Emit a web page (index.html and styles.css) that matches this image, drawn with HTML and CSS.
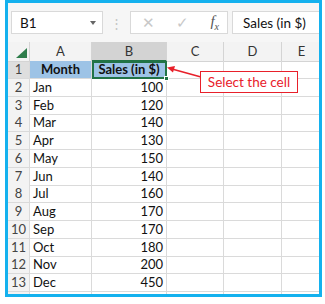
FILE: index.html
```html
<!DOCTYPE html>
<html lang="en">
<head>
    <meta charset="UTF-8">
    <title>Select the cell</title>
    <link rel="stylesheet" href="styles.css">
</head>
<body>
    <div class="frame">
        <!-- Barra de fórmulas -->
        <div class="toolbar">
            <div class="namebox">
                <span>B1</span>
                <span class="caret"></span>
            </div>
            <div class="dots">⋮</div>
            <div class="funcbox">
                <span class="fn-btn">✕</span>
                <span class="fn-btn">✓</span>
                <span class="fx"><i>f</i><sub>x</sub></span>
            </div>
            <div class="formula">Sales (in $)</div>
        </div>

        <!-- Hoja -->
        <div class="sheet">
            <div class="row head">
                <div class="corner"><span class="tri"></span></div>
                <div>A</div>
                <div class="sel-col">B</div>
                <div>C</div>
                <div>D</div>
                <div>E</div>
            </div>
            <div class="row">
                <div class="num sel-row">1</div>
                <div class="title">Month</div>
                <div class="title active">Sales (in $)<span class="handle"></span></div>
                <div></div><div></div><div></div>
            </div>
            <div class="row"><div class="num">2</div><div>Jan</div><div class="val">100</div><div></div><div></div><div></div></div>
            <div class="row"><div class="num">3</div><div>Feb</div><div class="val">120</div><div></div><div></div><div></div></div>
            <div class="row"><div class="num">4</div><div>Mar</div><div class="val">140</div><div></div><div></div><div></div></div>
            <div class="row"><div class="num">5</div><div>Apr</div><div class="val">130</div><div></div><div></div><div></div></div>
            <div class="row"><div class="num">6</div><div>May</div><div class="val">150</div><div></div><div></div><div></div></div>
            <div class="row"><div class="num">7</div><div>Jun</div><div class="val">140</div><div></div><div></div><div></div></div>
            <div class="row"><div class="num">8</div><div>Jul</div><div class="val">160</div><div></div><div></div><div></div></div>
            <div class="row"><div class="num">9</div><div>Aug</div><div class="val">170</div><div></div><div></div><div></div></div>
            <div class="row"><div class="num">10</div><div>Sep</div><div class="val">170</div><div></div><div></div><div></div></div>
            <div class="row"><div class="num">11</div><div>Oct</div><div class="val">180</div><div></div><div></div><div></div></div>
            <div class="row"><div class="num">12</div><div>Nov</div><div class="val">200</div><div></div><div></div><div></div></div>
            <div class="row"><div class="num">13</div><div>Dec</div><div class="val">450</div><div></div><div></div><div></div></div>
            <div class="row"><div class="num"></div><div></div><div></div><div></div><div></div><div></div></div>
        </div>

        <!-- Nota -->
        <svg class="arrow" width="36" height="16" viewBox="0 0 36 16">
            <line x1="35" y1="12" x2="6" y2="4" stroke="#e8202a" stroke-width="1.5"/>
            <polygon points="1,2.5 9,1 7,7.5" fill="#e8202a"/>
        </svg>
        <div class="callout">Select the cell</div>
    </div>
</body>
</html>
```

FILE: styles.css
```css
/* Estilos generales */
* {
    margin: 0;
    padding: 0;
    box-sizing: border-box;
}

body {
    font-family: Lato, "Liberation Sans", Arial, sans-serif;
    background-color: #fff;
    color: #111;
}

/* Marco azul */
.frame {
    position: relative;
    margin-left: 5px;
    width: 317px;
    height: 297px;
    border: 3px solid #14b1ee;
    overflow: hidden;
}

/* Barra de fórmulas */
.toolbar {
    height: 39px;
    background-color: #f6f6f6;
    display: flex;
    align-items: center;
    padding-left: 3px;
}

.namebox,
.funcbox,
.formula {
    height: 23px;
    background-color: #fff;
    border: 1px solid #d9d9d9;
    display: flex;
    align-items: center;
    font-size: 13.5px;
}

.namebox {
    width: 92px;
    padding: 0 6px 0 8px;
    justify-content: space-between;
}

.caret {
    width: 0;
    height: 0;
    border-left: 3.5px solid transparent;
    border-right: 3.5px solid transparent;
    border-top: 4px solid #666;
}

.dots {
    width: 27px;
    text-align: center;
    color: #c4c4c4;
    font-size: 13px;
}

.funcbox {
    width: 98px;
    padding: 0 8px 0 0;
}

.fn-btn {
    color: #c8c8c8;
    font-size: 15px;
    width: 34px;
    text-align: center;
}

.fx {
    margin-left: auto;
    font-family: "Liberation Serif", serif;
    color: #555;
    font-size: 15px;
    line-height: 1;
}

.fx sub {
    font-size: 10px;
    font-style: italic;
}

.formula {
    flex: 1;
    margin-left: 4px;
    padding-left: 10px;
    border-right: none;
}

/* Hoja */
.row {
    display: grid;
    grid-template-columns: 22px 62px 75px 57px 58px 40px;
    height: 17.75px;
    font-size: 13px;
}

.row > div {
    border-right: 1px solid #dadada;
    border-bottom: 1px solid #dadada;
    padding: 0 3px;
    line-height: 17px;
    white-space: nowrap;
}

.row.head {
    height: 19px;
    background-color: #f3f3f3;
}

.row.head > div {
    text-align: center;
    line-height: 18px;
    color: #333;
    border-color: #d4d4d4;
}

.row.head .sel-col {
    background-color: #d3d3d3;
    border-bottom: 2px solid #217346;
}

.corner {
    position: relative;
}

.tri {
    position: absolute;
    right: 2px;
    bottom: 3px;
    width: 0;
    height: 0;
    border-left: 11px solid transparent;
    border-bottom: 10px solid #2e7d4b;
}

.num {
    background-color: #f3f3f3;
    text-align: center;
    color: #444;
    padding: 0 !important;
}

.num.sel-row {
    background-color: #dedede;
}

.title {
    background-color: #9dc3e6;
    text-align: center;
    font-weight: bold;
}

.active {
    position: relative;
    outline: 2px solid #217346;
    outline-offset: -2px;
}

.handle {
    position: absolute;
    right: -3px;
    bottom: -3px;
    width: 5px;
    height: 5px;
    background-color: #217346;
    border: 1px solid #fff;
}

.val {
    text-align: right;
}

/* Nota */
.callout {
    position: absolute;
    left: 192px;
    top: 68px;
    width: 98px;
    height: 22px;
    border: 1px solid #e8202a;
    background-color: #fff;
    color: #e8202a;
    font-size: 13.5px;
    text-align: center;
    line-height: 20px;
}

.arrow {
    position: absolute;
    left: 158px;
    top: 62px;
}
```
